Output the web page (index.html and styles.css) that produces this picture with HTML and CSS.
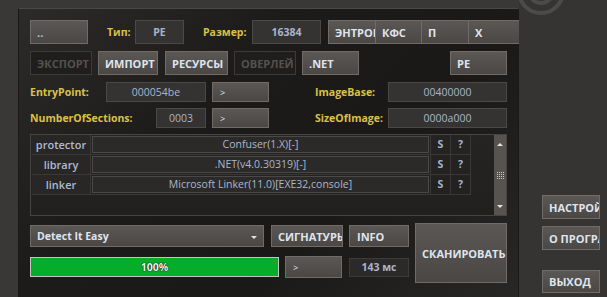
FILE: index.html
```html
<!DOCTYPE html>
<html lang="ru">
<head>
  <meta charset="UTF-8" />
  <title>Detect It Easy</title>
  <link rel="stylesheet" href="styles.css">
</head>
<body>
  <div class="side"></div>

  <div class="main">
    <div class="row r1">
      <button class="btn dots">..</button>
      <span class="lbl l-type">Тип:</span>
      <div class="val v-pe">PE</div>
      <span class="lbl l-size">Размер:</span>
      <div class="val v-size">16384</div>
      <div class="tabs">
        <button class="btn tab t1">ЭНТРОПИЯ</button>
        <button class="btn tab t2">КФС</button>
        <button class="btn tab t3">П</button>
        <button class="btn tab t4">X</button>
      </div>
    </div>

    <div class="row r2">
      <button class="btn off b-exp">ЭКСПОРТ</button>
      <button class="btn b-imp">ИМПОРТ</button>
      <button class="btn b-res">РЕСУРСЫ</button>
      <button class="btn off b-ovl">ОВЕРЛЕЙ</button>
      <button class="btn b-net">.NET</button>
      <button class="btn b-pe">PE</button>
    </div>

    <div class="row r3">
      <span class="lbl l-ep">EntryPoint:</span>
      <div class="val v-ep">000054be</div>
      <button class="btn go">&gt;</button>
      <span class="lbl l-ib">ImageBase:</span>
      <div class="val v-wide">00400000</div>
    </div>

    <div class="row r4">
      <span class="lbl l-ns">NumberOfSections:</span>
      <div class="val v-ns">0003</div>
      <button class="btn go">&gt;</button>
      <span class="lbl l-ib">SizeOfImage:</span>
      <div class="val v-wide">0000a000</div>
    </div>

    <div class="tbl">
      <div class="grid">
        <div class="c k">protector</div>
        <div class="c"><div class="v">Confuser(1.X)[-]</div></div>
        <div class="c s">S</div>
        <div class="c s">?</div>

        <div class="c k">library</div>
        <div class="c"><div class="v">.NET(v4.0.30319)[-]</div></div>
        <div class="c s">S</div>
        <div class="c s">?</div>

        <div class="c k">linker</div>
        <div class="c"><div class="v">Microsoft Linker(11.0)[EXE32,console]</div></div>
        <div class="c s">S</div>
        <div class="c s">?</div>
      </div>
      <div class="sb">
        <span class="arr up"></span>
        <svg class="grip" width="7" height="7" viewBox="0 0 7 7">
          <g fill="#cfcac4">
            <rect x="0" y="0" width="1" height="1"/><rect x="2" y="0" width="1" height="1"/><rect x="4" y="0" width="1" height="1"/><rect x="6" y="0" width="1" height="1"/>
            <rect x="0" y="2" width="1" height="1"/><rect x="2" y="2" width="1" height="1"/><rect x="4" y="2" width="1" height="1"/><rect x="6" y="2" width="1" height="1"/>
            <rect x="0" y="4" width="1" height="1"/><rect x="2" y="4" width="1" height="1"/><rect x="4" y="4" width="1" height="1"/><rect x="6" y="4" width="1" height="1"/>
            <rect x="0" y="6" width="1" height="1"/><rect x="2" y="6" width="1" height="1"/><rect x="4" y="6" width="1" height="1"/><rect x="6" y="6" width="1" height="1"/>
          </g>
        </svg>
        <span class="arr dn"></span>
      </div>
    </div>

    <div class="bottom">
      <div class="bleft">
        <div class="brow">
          <div class="combo">Detect It Easy<span class="caret"></span></div>
          <button class="btn sig">СИГНАТУРЫ</button>
          <button class="btn info">INFO</button>
        </div>
        <div class="brow b2">
          <div class="prog">100%</div>
          <button class="btn go2">&gt;</button>
          <div class="val ms">143 мс</div>
        </div>
      </div>
      <button class="btn scan">СКАНИРОВАТЬ</button>
    </div>
  </div>

  <div class="aside">
    <svg class="logo" width="50" height="16" viewBox="0 0 50 16">
      <circle cx="22" cy="-9" r="22" fill="none" stroke="#4d4b49" stroke-width="4"/>
      <circle cx="22" cy="-9" r="12" fill="none" stroke="#4d4b49" stroke-width="4"/>
    </svg>
    <button class="btn nav">НАСТРОЙКИ</button>
    <button class="btn nav n2">О ПРОГРАММЕ</button>
    <button class="btn nav n3">ВЫХОД</button>
  </div>
</body>
</html>
```

FILE: styles.css
```css
body {
  margin: 0;
  height: 297px;
  overflow: hidden;
  display: grid;
  grid-template-columns: 18px 501px 88px;
  background: #3a3836;
  font-family: "Open Sans", "Liberation Sans", sans-serif;
  font-size: 10.5px;
}
.main {
  margin-top: 8px;
  padding: 11px 11px 0 11px;
  border-top: 1px solid #4a4745;
  border-left: 1px solid #1a1918;
  border-right: 1px solid #1a1918;
  background: linear-gradient(135deg, #2d2b29 0%, #1c1b1a 35%, #1a1918 65%, #292725 100%);
}
.row {
  display: flex;
  align-items: center;
}
.row > * {
  flex-shrink: 0;
}

.btn {
  box-sizing: border-box;
  height: 24px;
  margin: 0;
  padding: 0 0 0 6px;
  font: bold 11px "Open Sans", "Liberation Sans", sans-serif;
  color: #dfe4ee;
  text-align: left;
  white-space: nowrap;
  overflow: hidden;
  background: linear-gradient(#5a5754, #4a4745);
  border: 1px solid #6e6b68;
}
.btn.off {
  background: #1f1e1d;
  border-color: #3d3b39;
  color: #55514e;
}
.lbl {
  color: #dcc04a;
  font-weight: bold;
  white-space: nowrap;
}
.val {
  box-sizing: border-box;
  height: 24px;
  line-height: 22px;
  text-align: center;
  color: #a8b5cb;
  background: #353331;
  border: 1px solid #4b4947;
}

/* row 1 */
.r1 { height: 24px; }
.dots { width: 58px; color: #b9c4d8; }
.l-type { margin-left: 19px; width: 28px; }
.v-pe { width: 49px; font-weight: bold; }
.l-size { margin-left: 19px; width: 49px; }
.v-size { width: 69px; font-weight: bold; }
.tabs {
  display: flex;
  margin-left: 7px;
}
.tab { width: 48px; }
.t2 { width: 47px; margin-left: -1px; }
.t3 { width: 48px; margin-left: -1px; }
.t4 { width: 52px; margin-left: -1px; }

/* row 2 */
.r2 { margin-top: 7px; height: 24px; }
.b-exp { width: 62px; }
.b-imp { width: 60px; margin-left: 6px; }
.b-res { width: 63px; margin-left: 7px; }
.b-ovl { width: 62px; margin-left: 6px; }
.b-net { width: 57px; margin-left: 6px; }
.b-pe { width: 57px; margin-left: auto; }

/* rows 3 and 4 */
.r3 { margin-top: 7px; height: 20px; }
.r4 { margin-top: 6px; height: 20px; }
.r3 .val, .r4 .val { height: 20px; line-height: 18px; }
.l-ep { width: 76px; }
.v-ep { width: 100px; }
.l-ns { width: 126px; }
.v-ns { width: 50px; }
.go {
  width: 57px;
  height: 20px;
  margin-left: 6px;
  padding-left: 7px;
  font-weight: normal;
  font-size: 9px;
}
.l-ib { margin-left: 46px; width: 73px; }
.v-wide { width: 119px; }

/* table */
.tbl {
  display: flex;
  height: 82px;
  margin-top: 6px;
  box-sizing: border-box;
  border: 1px solid #474442;
  background: linear-gradient(#262422, #21201e);
}
.grid {
  flex: 1;
  display: grid;
  grid-template-columns: 59px 340px 20px 20px;
  grid-auto-rows: 20px;
  align-content: start;
  padding-left: 1px;
}
.c {
  box-sizing: border-box;
  border-right: 1px solid #3a3836;
  border-bottom: 1px solid #3a3836;
}
.k {
  background: #292725;
  color: #aebbd2;
  font-weight: 600;
  font-size: 11px;
  text-align: center;
  line-height: 19px;
}
.v {
  box-sizing: border-box;
  height: 17px;
  margin: 1px 1px 0 1px;
  border: 1px solid #4b4947;
  background: #2c2a28;
  color: #a9b7cf;
  text-align: center;
  line-height: 15px;
  white-space: nowrap;
}
.s {
  color: #a6b4cc;
  font-weight: bold;
  text-align: center;
  line-height: 19px;
}
.sb {
  width: 12px;
  background: #57544f;
  display: flex;
  flex-direction: column;
  justify-content: space-between;
  align-items: center;
  padding: 8px 0 7px;
  box-sizing: border-box;
}
.arr {
  width: 0;
  height: 0;
  border-left: 3px solid transparent;
  border-right: 3px solid transparent;
}
.up { border-bottom: 3px solid #e8e4de; }
.dn { border-top: 3px solid #e8e4de; }

/* bottom */
.bottom {
  display: flex;
  margin-top: 7px;
}
.bleft {
  width: 379px;
  margin-right: 6px;
}
.brow {
  display: flex;
  align-items: center;
  padding-top: 2px;
}
.combo {
  position: relative;
  box-sizing: border-box;
  width: 234px;
  height: 22px;
  line-height: 20px;
  padding-left: 6px;
  color: #dfe4ee;
  font-weight: bold;
  background: linear-gradient(#5a5754, #4a4745);
  border: 1px solid #6e6b68;
}
.caret {
  position: absolute;
  right: 6px;
  top: 10px;
  border-left: 3px solid transparent;
  border-right: 3px solid transparent;
  border-top: 3px solid #e6e2dc;
}
.sig { width: 72px; height: 22px; margin-left: 7px; }
.info { width: 60px; height: 22px; margin-left: 6px; padding-left: 7px; }
.b2 {
  margin-top: 9px;
  padding-top: 0;
  height: 22px;
}
.prog {
  box-sizing: border-box;
  width: 249px;
  height: 20px;
  line-height: 18px;
  text-align: center;
  background: #06ad2a;
  border: 1px solid #c4c4c4;
  color: #f2f2f2;
  font-weight: bold;
  text-shadow: 0 0 1px #000, 0 0 1px #000;
}
.go2 {
  width: 57px;
  height: 22px;
  margin-left: 6px;
  padding-left: 7px;
  font-weight: normal;
  font-size: 9px;
}
.ms {
  width: 60px;
  height: 19px;
  line-height: 17px;
  margin-left: 7px;
  background: #2c2a28;
  border-color: #3d3b39;
  font-weight: bold;
}
.scan {
  width: 92px;
  height: 60px;
}

/* right side */
.aside {
  position: relative;
  background: #363433;
  padding: 195px 0 0 23px;
}
.logo {
  position: absolute;
  left: 0;
  top: 0;
}
.nav {
  display: block;
  width: 58px;
  height: 24px;
}
.n2 { margin-top: 7px; }
.n3 { margin-top: 20px; height: 23px; }
```
